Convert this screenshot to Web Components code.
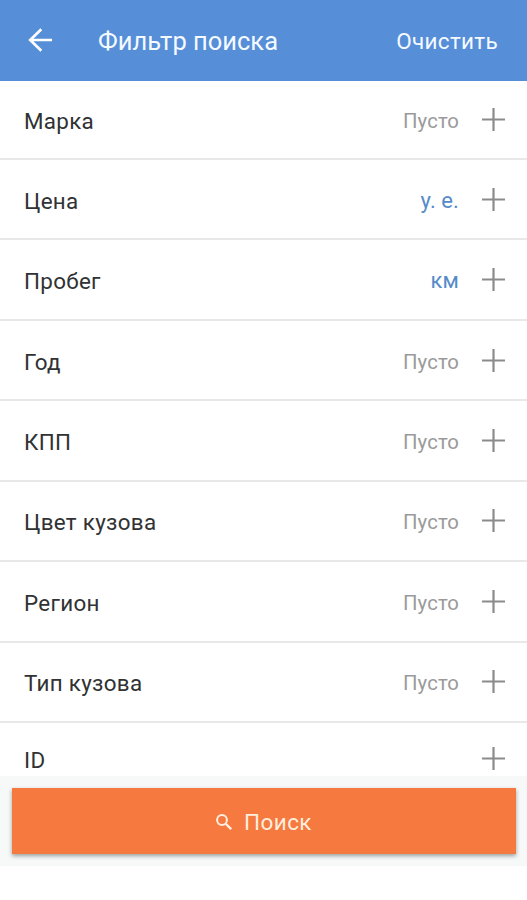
<!DOCTYPE html>
<html lang="ru">
<head>
<meta charset="utf-8">
<title>Фильтр поиска</title>
<style>
html, body { margin: 0; height: 100%; background: #fff; overflow: hidden; }
body { font-family: Roboto, "Liberation Sans", sans-serif; }
</style>
</head>
<body>
<filter-screen></filter-screen>
<script>
function define(name, html, setup) {
  const template = document.createElement('template');
  template.innerHTML = html;
  customElements.define(name, class extends HTMLElement {
    constructor() {
      super();
      this.attachShadow({ mode: 'open' }).append(template.content.cloneNode(true));
    }
    connectedCallback() { if (setup) setup(this); }
  });
}

define('app-header', `
<style>
:host { display: flex; align-items: center; box-sizing: border-box; height: 80.6px; padding: 2px 29px 0 28px; background: #568ed8; color: #f4faff; }
svg { width: 24px; height: 24px; flex: none; margin-top: -2px; }
h1 { margin: 0 0 0 46px; font-size: 25.5px; font-weight: 400; letter-spacing: var(--title-spacing, 0); white-space: nowrap; line-height: 30px; }
button { margin: 0 0 0 auto; padding: 0; border: 0; background: none; color: inherit; font: 400 22.5px/28px Roboto, sans-serif; letter-spacing: .3px; }
</style>
<svg viewBox="0 0 24 24" fill="none" stroke="#fff" stroke-width="2.7"><path d="M24 12H2.4M13.3 1.2 2.2 12l11.1 10.8"/></svg>
<h1><slot></slot></h1>
<button><slot name="action"></slot></button>`);

define('filter-row', `
<style>
:host { display: flex; align-items: center; box-sizing: border-box; height: 80.45px; padding: 3px 22px 0 24px; border-bottom: 2px solid #e8e8e9; color: #303233; font-size: 22.4px; line-height: 28px; }
:host([first]) { height: 79.4px; }
:host([last]) { height: 52.5px; padding-top: 22px; border: 0; }
.label { flex: 1; letter-spacing: .3px; }
.value { color: #9a9a9a; font-size: 20.3px; margin-right: 23px; letter-spacing: .1px; }
:host([unit]) .value { color: #558bc9; font-size: 22px; }
svg { width: 23px; height: 23px; flex: none; margin-top: -3px; }
</style>
<span class="label"></span><span class="value"><slot></slot></span>
<svg viewBox="0 0 23 23" fill="none" stroke="#8b8b8b" stroke-width="2.2"><path d="M0 11.5h23M11.5 0v23"/></svg>`,
el => { el.shadowRoot.querySelector('.label').textContent = el.getAttribute('label'); });

define('search-bar', `
<style>
:host { display: block; box-sizing: border-box; height: 90px; padding: 12px 11px 0 12px; background: #f7f9f9; }
button { display: flex; align-items: center; justify-content: center; gap: 12px; width: 100%; height: 66px; padding: 3px 0 0; border: 0; background: #f67940; color: #ffeede; font: 400 22.5px/28px Roboto, sans-serif; letter-spacing: .4px; box-shadow: 0 2px 4px rgba(40,50,50,.45); }
svg { width: 16px; height: 16px; flex: none; }
</style>
<button><svg viewBox="0 0 16 16" fill="none" stroke="currentColor"><circle cx="6" cy="6" r="4.9" stroke-width="2"/><path d="m9.5 9.5 5.7 5.7" stroke-width="2.4"/></svg><slot></slot></button>`);

define('filter-screen', `
<style>:host { display: flex; flex-direction: column; height: 100%; background: #fff; }</style>
<app-header>Фильтр поиска<span slot="action">Очистить</span></app-header>
<filter-row first label="Марка">Пусто</filter-row>
<filter-row unit label="Цена">у. е.</filter-row>
<filter-row unit label="Пробег">км</filter-row>
<filter-row label="Год">Пусто</filter-row>
<filter-row label="КПП">Пусто</filter-row>
<filter-row label="Цвет кузова">Пусто</filter-row>
<filter-row label="Регион">Пусто</filter-row>
<filter-row label="Тип кузова">Пусто</filter-row>
<filter-row last label="ID"></filter-row>
<search-bar>Поиск</search-bar>`);
</script>
</body>
</html>
